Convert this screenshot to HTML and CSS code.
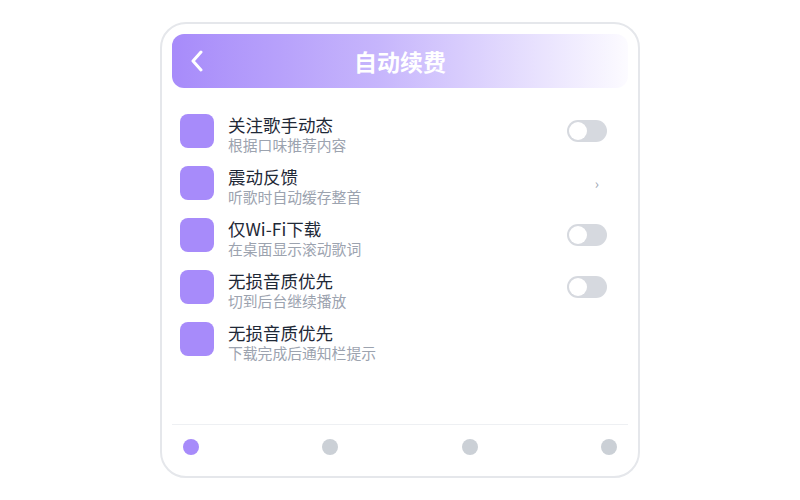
FILE: index.html
```html
<!DOCTYPE html>
<html lang="zh-CN">
<head>
    <meta charset="UTF-8">
    <meta name="viewport" content="width=device-width, initial-scale=1.0">
    <title>自动续费</title>
    <link rel="stylesheet" href="styles.css">
</head>
<body>
    <div class="phone">
        <div class="header">
            <span class="back">
                <svg width="14" height="22" viewBox="0 0 14 22"><polyline points="11,2 3,11 11,20" fill="none" stroke="#fff" stroke-width="3" stroke-linecap="round" stroke-linejoin="round"/></svg>
            </span>
            <h1>自动续费</h1>
        </div>

        <ul class="settings">
            <li class="row">
                <span class="icon"></span>
                <div class="text">
                    <div class="title">关注歌手动态</div>
                    <div class="desc">根据口味推荐内容</div>
                </div>
                <span class="toggle"></span>
            </li>
            <li class="row">
                <span class="icon"></span>
                <div class="text">
                    <div class="title">震动反馈</div>
                    <div class="desc">听歌时自动缓存整首</div>
                </div>
                <span class="arrow">›</span>
            </li>
            <li class="row">
                <span class="icon"></span>
                <div class="text">
                    <div class="title">仅Wi-Fi下载</div>
                    <div class="desc">在桌面显示滚动歌词</div>
                </div>
                <span class="toggle"></span>
            </li>
            <li class="row">
                <span class="icon"></span>
                <div class="text">
                    <div class="title">无损音质优先</div>
                    <div class="desc">切到后台继续播放</div>
                </div>
                <span class="toggle"></span>
            </li>
            <li class="row">
                <span class="icon"></span>
                <div class="text">
                    <div class="title">无损音质优先</div>
                    <div class="desc">下载完成后通知栏提示</div>
                </div>
            </li>
        </ul>

        <div class="tabbar">
            <span class="dot active"></span>
            <span class="dot"></span>
            <span class="dot"></span>
            <span class="dot"></span>
        </div>
    </div>
</body>
</html>
```

FILE: styles.css
```css
* {
    box-sizing: border-box;
}
body {
    margin: 0;
    font-family: "Noto Sans CJK SC", "Noto Sans", sans-serif;
    background: #fff;
}
.phone {
    width: 480px;
    height: 456px;
    margin: 22px auto 0;
    border: 2px solid #e5e7eb;
    border-radius: 26px;
    padding: 10px;
    display: flex;
    flex-direction: column;
    background: #fff;
}
.header {
    height: 54px;
    border-radius: 12px;
    background: linear-gradient(90deg, #a78bfa 0%, #c6b5fc 45%, #fcfbff 100%);
    display: flex;
    align-items: center;
    justify-content: center;
    position: relative;
}
.back {
    position: absolute;
    left: 18px;
    top: 16px;
    display: flex;
}
.header h1 {
    margin: 0;
    font-size: 23px;
    font-weight: 700;
    color: #fff;
    line-height: 1;
}
.settings {
    list-style: none;
    margin: 0;
    padding: 17px 0 0;
    flex: 1;
}
.row {
    height: 52px;
    display: flex;
    align-items: center;
    padding: 0 21px 0 8px;
}
.icon {
    width: 34px;
    height: 34px;
    border-radius: 8px;
    background: #a78bfa;
    flex-shrink: 0;
}
.text {
    flex: 1;
    margin: 6px 0 0 14px;
}
.title {
    font-size: 17.5px;
    line-height: 22px;
    color: #1f2937;
}
.desc {
    font-size: 14.8px;
    line-height: 18px;
    color: #9ca3af;
}
.toggle {
    width: 40px;
    height: 22px;
    border-radius: 11px;
    background: #d6d9df;
    position: relative;
    flex-shrink: 0;
}
.toggle::after {
    content: "";
    position: absolute;
    left: 2px;
    top: 2px;
    width: 18px;
    height: 18px;
    border-radius: 50%;
    background: #fff;
}
.arrow {
    font-size: 14px;
    color: #9ca3af;
    margin-right: 8px;
    line-height: 1;
}
.tabbar {
    border-top: 1px solid #eef0f3;
    height: 42px;
    padding: 14px 11px 0;
    display: flex;
    justify-content: space-between;
    align-items: flex-start;
}
.dot {
    width: 16px;
    height: 16px;
    border-radius: 50%;
    background: #cbd0d6;
}
.dot.active {
    background: #a78bfa;
}
```
